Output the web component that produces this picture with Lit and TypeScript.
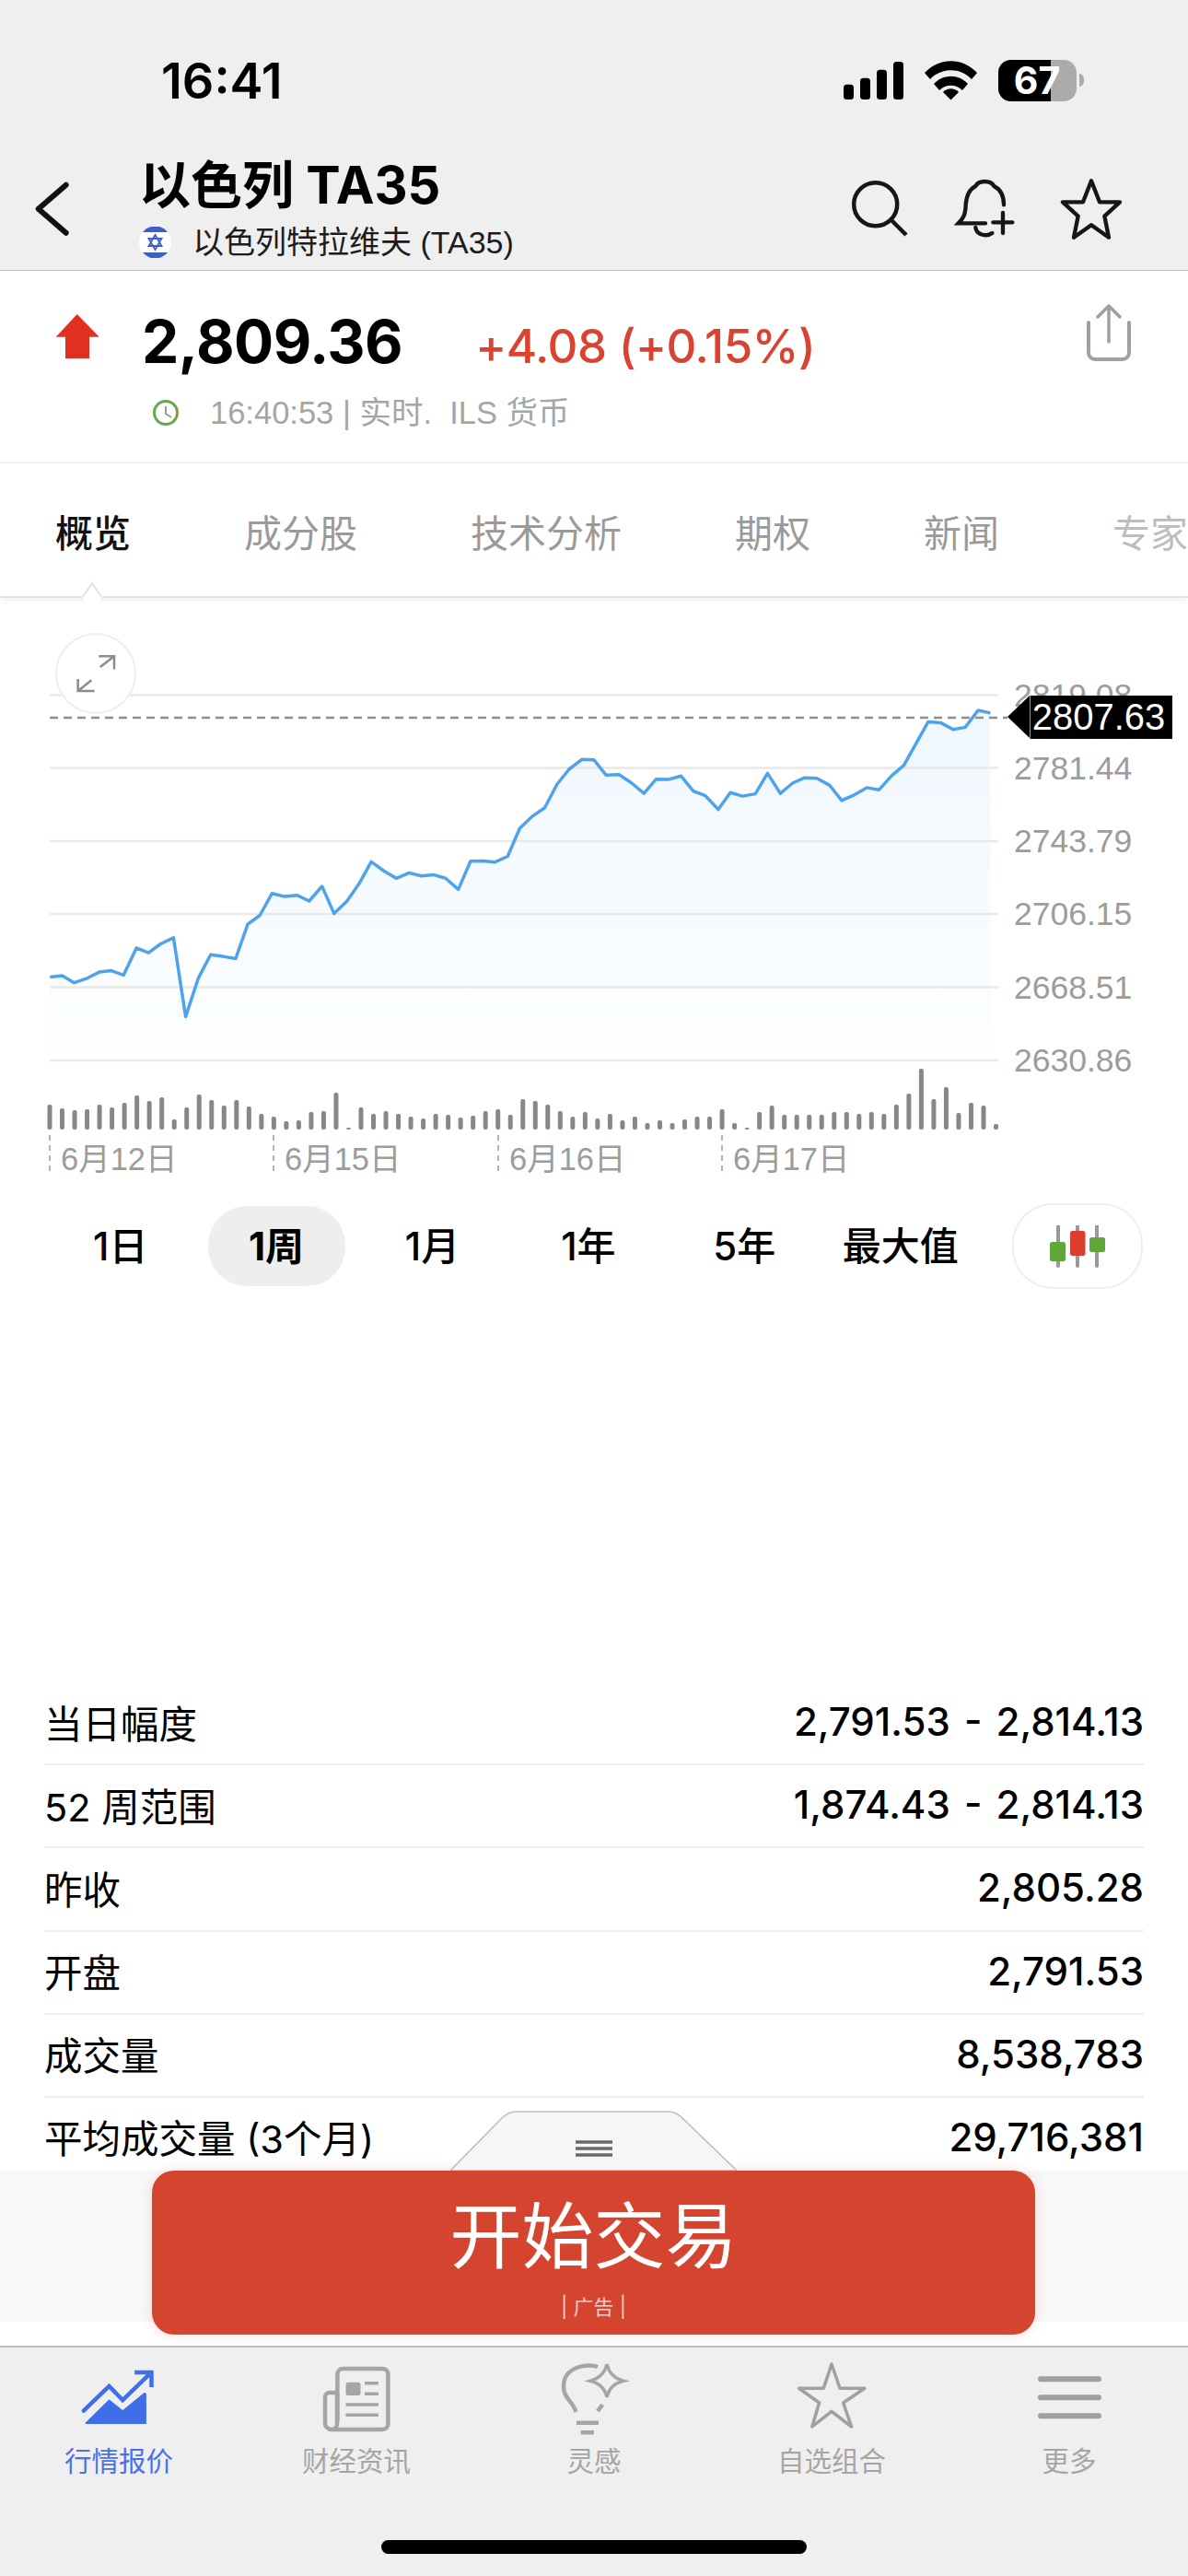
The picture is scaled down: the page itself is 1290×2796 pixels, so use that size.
import { LitElement, html, css, svg } from 'lit';
import { customElement } from 'lit/decorators.js';

// line points read off the reference, x/y in page pixels
const LINE_ZOOM = [
  [66,826],[82,823],[98,839],[115,829],[131,815],[147,812],[163,822],[180,761],[196,772],[212,752],[229,738],[245,915],
  [262,828],[278,776],[294,780],[311,785],[327,708],[343,688],[359,639],[376,646],[392,643],[408,656],[425,623],[441,684],
  [458,656],[474,617],[490,568],[507,589],[523,605],[540,593],[556,600],[572,597],[588,605],[605,630],[621,567],[637,566],
  [653,569],[670,556],[686,493],[702,467],[719,447],[735,395],[751,361],[768,339],[784,340],[800,374],[817,373],[833,391],
  [850,415],[866,383],[882,384],[899,376],[915,410],[931,420],[948,451],[964,413],[980,421],[997,416],[1013,370],[1030,415],
  [1046,392],[1062,380],[1078,381],[1095,397],[1111,431],[1128,418],[1144,402],[1160,407],[1177,375],[1193,352],[1225,255],
  [1242,257],[1258,272],[1274,267],[1291,229],[1307,235],
];
const LINE = LINE_ZOOM.map(([x, y]) => [+(x / 1.2155).toFixed(1), +(660 + y / 2.063).toFixed(1)]);

const VOLUMES = [
  27,23,21,22,27,24,29,37,31,35,11,24,38,32,26,32,25,17,14,9,10,19,20,40,2,24,17,20,17,14,12,17,16,13,15,20,22,16,33,31,27,
  20,14,19,12,17,10,14,7,10,7,11,14,14,22,7,2,19,26,16,16,16,16,19,19,17,19,17,27,39,66,33,46,18,29,26,6,
];

const GRID = [
  { y: 754.5, label: '2819.08' },
  { y: 833.5, label: '2781.44' },
  { y: 913, label: '2743.79' },
  { y: 992, label: '2706.15' },
  { y: 1071.5, label: '2668.51' },
  { y: 1151, label: '2630.86' },
];

const DATES = [
  { x: 54, label: '6月12日' },
  { x: 297, label: '6月15日' },
  { x: 541, label: '6月16日' },
  { x: 784, label: '6月17日' },
];

const STATS = [
  ['当日幅度', '2,791.53 - 2,814.13'],
  ['52 周范围', '1,874.43 - 2,814.13'],
  ['昨收', '2,805.28'],
  ['开盘', '2,791.53'],
  ['成交量', '8,538,783'],
  ['平均成交量 (3个月)', '29,716,381'],
];

const TABS = ['概览', '成分股', '技术分析', '期权', '新闻', '专家'];
const RANGES = ['1日', '1周', '1月', '1年', '5年', '最大值'];

@customElement('app-root')
export class AppRoot extends LitElement {
  static styles = css`
    * {
      margin: 0;
      padding: 0;
      box-sizing: border-box;
    }

    :host {
      display: flex;
      flex-direction: column;
      position: relative;
      width: 1290px;
      height: 2796px;
      overflow: hidden;
      background: #fff;
      color: #000;
      font-family: Inter, 'Noto Sans CJK SC', sans-serif;
    }

    svg {
      display: block;
      flex: none;
    }

    .top {
      height: 294px;
      background: #efeff0;
      border-bottom: 1px solid #b9b9b9;
    }

    .status {
      display: flex;
      align-items: center;
      justify-content: space-between;
      height: 175px;
      padding: 0 113px 0 175px;
    }

    .status__time {
      font-size: 54px;
      font-weight: 600;
      letter-spacing: 0;
    }

    .nav {
      display: flex;
      height: 118px;
      padding-left: 36px;
    }

    .nav__back {
      margin-top: 20px;
    }

    .nav__text {
      margin-left: 75px;
    }

    .nav__title {
      font-size: 56px;
      line-height: 56px;
      font-weight: 700;
      margin-top: -2px;
    }

    .nav__sub {
      display: flex;
      align-items: center;
      gap: 23px;
      margin-top: 14px;
      font-family: 'Liberation Sans', 'Noto Sans CJK SC', sans-serif;
      font-size: 34px;
      line-height: 40px;
      color: #1c1c1c;
    }

    .nav__actions {
      display: flex;
      margin-left: auto;
      padding-right: 70px;
      margin-top: 17px;
      height: 70px;
      align-items: center;
      gap: 46px;
    }

    .quote {
      height: 209px;
      padding: 36px 62px 0 60px;
      border-bottom: 2px solid #f1f1f1;
    }

    .quote__main {
      display: flex;
      height: 62px;
    }

    .quote__arrow {
      margin-top: 11px;
    }

    .quote__values {
      display: flex;
      align-items: baseline;
      margin-left: 46px;
      margin-top: 5px;
      height: 72px;
    }

    .quote__price {
      font-size: 64px;
      line-height: 72px;
      font-weight: 700;
      letter-spacing: -0.5px;
    }

    .quote__change {
      margin-left: 79px;
      font-size: 51px;
      font-weight: 500;
      color: #d9432f;
      letter-spacing: -0.5px;
    }

    .quote__share {
      margin-left: auto;
    }

    .quote__meta {
      display: flex;
      align-items: center;
      gap: 34px;
      margin-top: 36px;
      padding-left: 106px;
      font-family: 'Liberation Sans', 'Noto Sans CJK SC', sans-serif;
      font-size: 34.5px;
      line-height: 40px;
      color: #a5a5a5;
    }

    .tabs {
      position: relative;
      display: flex;
      gap: 123px;
      height: 146px;
      padding: 48px 0 0 60px;
      border-bottom: 2px solid #e2e2e2;
      box-shadow: 0 3px 6px rgba(0, 0, 0, 0.05);
      font-size: 41px;
      line-height: 56px;
      color: #9a9a9a;
      white-space: nowrap;
    }

    .tabs__item--active {
      color: #111;
      font-weight: 500;
    }

    .tabs__item--fade {
      opacity: 0.65;
    }

    .tabs__notch {
      position: absolute;
      left: 90px;
      bottom: -11px;
      width: 20px;
      height: 20px;
      background: #fff;
      border-left: 2px solid #e2e2e2;
      border-top: 2px solid #e2e2e2;
      transform: rotate(45deg) skew(10deg, 10deg);
    }

    .chart {
      position: relative;
      height: 640px;
    }

    .chart__label {
      font-family: 'Liberation Sans', sans-serif;
      font-size: 35.5px;
      fill: #9c9c9c;
    }

    .chart__date {
      font-family: 'Liberation Sans', 'Noto Sans CJK SC', sans-serif;
      font-size: 34.5px;
      fill: #9c9c9c;
    }

    .chart__expand {
      position: absolute;
      left: 60px;
      top: 38px;
      width: 88px;
      height: 88px;
      display: flex;
      align-items: center;
      justify-content: center;
      background: #fff;
      border: 2px solid #eeeeee;
      border-radius: 50%;
    }

    .chart__tag {
      position: absolute;
      left: 1118px;
      top: 106px;
      width: 155px;
      height: 47px;
      padding-right: 6px;
      background: #000;
      border-left: 1px solid #999;
      color: #fff;
      font-family: 'Liberation Sans', sans-serif;
      font-size: 40px;
      line-height: 47px;
      text-align: center;
    }

    .chart__tag::before {
      content: '';
      position: absolute;
      left: -25px;
      top: 0;
      border-style: solid;
      border-width: 23.5px 24px 23.5px 0;
      border-color: transparent #000 transparent transparent;
    }

    .ranges {
      display: flex;
      align-items: center;
      height: 93px;
      margin-top: 17px;
      padding-left: 46px;
    }

    .ranges__item {
      display: flex;
      align-items: center;
      justify-content: center;
      width: 169.4px;
      font-size: 42px;
      font-weight: 500;
    }

    .ranges__item span {
      display: block;
      width: 149px;
      height: 87px;
      line-height: 87px;
      text-align: center;
      border-radius: 42px;
    }

    .ranges__item--active span {
      background: #eeeeee;
      font-weight: 700;
    }

    .ranges__candles {
      display: flex;
      align-items: center;
      justify-content: center;
      width: 142px;
      height: 93px;
      margin-left: 37px;
      border: 2px solid #eeeeee;
      border-radius: 44px;
    }

    .stats {
      margin: 427px 48px 0;
    }

    .stats__row {
      display: flex;
      align-items: center;
      justify-content: space-between;
      height: 90.2px;
      padding-bottom: 3px;
      border-bottom: 2px solid #eeeeee;
      font-size: 41.5px;
    }

    .stats__row:last-child {
      padding-bottom: 6px;
      border-bottom: none;
    }

    .stats__value {
      font-size: 42px;
      font-weight: 500;
      word-spacing: 4px;
    }

    .dock {
      position: absolute;
      left: 0;
      right: 0;
      bottom: 250px;
      height: 190px;
      background: linear-gradient(#f8f8f8 164px, #fff 164px);
    }

    .dock__handle {
      position: absolute;
      left: 487px;
      top: -66px;
    }

    .dock__button {
      display: flex;
      flex-direction: column;
      align-items: center;
      width: 959px;
      height: 178px;
      margin-left: 165px;
      padding-top: 27px;
      background: #d5442f;
      border-radius: 24px;
      box-shadow: 0 0 14px rgba(213, 68, 47, 0.18);
      color: #fff;
    }

    .dock__title {
      font-size: 78px;
      line-height: 90px;
      font-weight: 400;
    }

    .dock__note {
      margin-top: 17px;
      font-size: 22px;
      line-height: 28px;
      color: #f6cdc7;
    }

    .tabbar {
      margin-top: auto;
      height: 250px;
      background: #efeff0;
      border-top: 2px solid #bcbcbc;
    }

    .tabbar__items {
      display: grid;
      grid-template-columns: repeat(5, 1fr);
      padding-top: 14px;
    }

    .tabbar__item {
      display: flex;
      flex-direction: column;
      align-items: center;
      gap: 4px;
      font-size: 29.5px;
      line-height: 30px;
      color: #a5a5a5;
    }

    .tabbar__item--active {
      color: #4a72e8;
    }

    .tabbar__home {
      width: 462px;
      height: 15px;
      margin: 71px auto 0;
      background: #000;
      border-radius: 8px;
    }
  `;

  renderChart() {
    const pts = LINE.map(p => p.join(',')).join(' ');
    const last = LINE[LINE.length - 1];
    const area = `${LINE[0][0]},1151 ${pts} ${last[0]},1151`;
    return html`
      <svg width="1290" height="640" viewBox="0 649 1290 640">
        <defs>
          <linearGradient id="fill" x1="0" y1="0" x2="0" y2="1">
            <stop offset="0" stop-color="#eff7fd"></stop>
            <stop offset="1" stop-color="#fdfeff"></stop>
          </linearGradient>
        </defs>
        <polygon points=${area} fill="url(#fill)"></polygon>
        ${GRID.map(g => svg`
          <line x1="54" x2="1084" y1=${g.y} y2=${g.y} stroke="#e9e9e9" stroke-width="2.5"></line>
          <text class="chart__label" x="1101" y=${g.y + 12}>${g.label}</text>
        `)}
        <line x1="54" x2="1094" y1="779" y2="779" stroke="#8f8f8f" stroke-width="2.5" stroke-dasharray="9 6"></line>
        <polyline points=${pts} fill="none" stroke="#4fa3ec" stroke-width="3.5" stroke-linejoin="round"></polyline>
        ${VOLUMES.map((h, i) => svg`
          <rect x=${51.5 + i * 13.52} y=${1226 - h} width="5" height=${h} rx="2" fill="#85878b"></rect>
        `)}
        ${DATES.map(d => svg`
          <line x1=${d.x} x2=${d.x} y1="1232" y2="1274" stroke="#9a9a9a" stroke-width="1.5" stroke-dasharray="6 5"></line>
          <text class="chart__date" x=${d.x + 12} y="1270">${d.label}</text>
        `)}
      </svg>
      <div class="chart__expand">
        <svg width="44" height="42" viewBox="82 710 45 43" fill="none" stroke="#8c8c8c" stroke-width="2.6">
          <path d="M84.7 737.6V751H103M84.7 751l15-12"></path>
          <path d="M107.8 712.4H125V727M125 712.4l-15.6 12"></path>
        </svg>
      </div>
      <div class="chart__tag">2807.63</div>
    `;
  }

  render() {
    return html`
      <header class="top">
        <div class="status">
          <span class="status__time">16:41</span>
          <svg width="261" height="46" viewBox="916 64 261 46">
            <rect x="916" y="90.7" width="11" height="16.3" rx="3.5"></rect>
            <rect x="934" y="83.7" width="11" height="23.3" rx="3.5"></rect>
            <rect x="952" y="74.7" width="11" height="32.3" rx="3.5"></rect>
            <rect x="970" y="66" width="11" height="41" rx="3.5"></rect>
            <path d="M1004 78c16-17 41-17 57 0l-6 7c-12-13-33-13-45 0z"></path>
            <path d="M1014 90c10-11 27-11 37 0l-6 7c-7-7-18-7-25 0z"></path>
            <path d="M1024 99c5-5 12-5 17 0l-8.500 8.500z"></path>
            <rect x="1084" y="64" width="85" height="45" rx="14" fill="#ababab"></rect>
            <path d="M1098 64h43v45h-43a14 14 0 0 1-14-14V78a14 14 0 0 1 14-14z"></path>
            <path d="M1172 79c3 0 5 3 5 7s-2 7-5 7z" fill="#ababab"></path>
            <text x="1126" y="101" text-anchor="middle" fill="#fff" font-size="41" font-weight="700">67</text>
          </svg>
        </div>
        <nav class="nav">
          <svg class="nav__back" width="40" height="64" viewBox="36 195 40 64" fill="none" stroke="#111" stroke-width="6" stroke-linecap="round" stroke-linejoin="round">
            <path d="M71.700 200.700L41.700 226.700L71.700 252.700"></path>
          </svg>
          <div class="nav__text">
            <div class="nav__title">以色列 TA35</div>
            <div class="nav__sub">
              <svg width="35" height="36" viewBox="0 0 35 36">
                <defs><clipPath id="flag"><circle cx="17.500" cy="18" r="17.500"></circle></clipPath></defs>
                <g clip-path="url(#flag)">
                  <rect width="35" height="36" fill="#fff"></rect>
                  <rect width="35" height="6" y="1" fill="#3c5fc8"></rect>
                  <rect width="35" height="6" y="29" fill="#3c5fc8"></rect>
                </g>
                <path d="M17.500 10l7 12h-14zM17.500 26l-7-12h14z" fill="none" stroke="#3c5fc8" stroke-width="1.800"></path>
              </svg>
              <span>以色列特拉维夫 (TA35)</span>
            </div>
          </div>
          <div class="nav__actions">
            <svg width="66" height="66" viewBox="0 0 66 66" fill="none" stroke="#15151a" stroke-width="4.500">
              <circle cx="26.700" cy="27.700" r="23.500"></circle>
              <path d="M43 44l17 17"></path>
            </svg>
            <svg width="68" height="68" viewBox="560 460 204 204" fill="none" stroke="#15151a" stroke-width="13" stroke-linecap="round">
              <path d="M722 548C722 505 700 492 690 487C680 467 640 467 630 487C610 497 600 520 598 548C597 580 590 592 574 608H662"></path>
              <path d="M630 622C634 648 668 652 684 640"></path>
              <path d="M687 605H750M719 574V640"></path>
            </svg>
            <svg width="70" height="70" viewBox="900 455 210 210" fill="none" stroke="#15151a" stroke-width="13" stroke-linejoin="round">
              <polygon points="1005,468 1032,537 1098,537 1048,583 1062,652 1005,612 948,652 962,583 912,537 978,537"></polygon>
            </svg>
          </div>
        </nav>
      </header>

      <section class="quote">
        <div class="quote__main">
          <svg class="quote__arrow" width="48" height="48" viewBox="60 341 48 48">
            <path d="M83.700 341L107.700 365.700H97V389H71V365.700H60.700z" fill="#e1301f"></path>
          </svg>
          <div class="quote__values">
            <span class="quote__price">2,809.36</span>
            <span class="quote__change">+4.08 (+0.15%)</span>
          </div>
          <svg class="quote__share" width="48" height="62" viewBox="0 0 48 62" fill="none" stroke="#a0a0a0" stroke-width="3.500" stroke-linecap="round" stroke-linejoin="round">
            <path d="M24 41V2M12 14L24 2l12 12"></path>
            <path d="M2 20v33a7 7 0 0 0 7 7h30a7 7 0 0 0 7-7V20" stroke-width="4"></path>
          </svg>
        </div>
        <div class="quote__meta">
          <svg width="28" height="30" viewBox="0 0 28 30" fill="none">
            <circle cx="14" cy="15" r="12.500" stroke="#6aa84f" stroke-width="3"></circle>
            <path d="M14 8v8l6 4" stroke="#9a9a9a" stroke-width="2"></path>
          </svg>
          <span>16:40:53 | 实时.&nbsp; ILS 货币</span>
        </div>
      </section>

      <div class="tabs">
        ${TABS.map((t, i) => html`
          <span class="tabs__item ${i === 0 ? 'tabs__item--active' : ''} ${i === 5 ? 'tabs__item--fade' : ''}">${t}</span>
        `)}
        <i class="tabs__notch"></i>
      </div>

      <div class="chart">${this.renderChart()}</div>

      <div class="ranges">
        ${RANGES.map((r, i) => html`
          <div class="ranges__item ${i === 1 ? 'ranges__item--active' : ''}"><span>${r}</span></div>
        `)}
        <div class="ranges__candles">
          <svg width="62" height="46" viewBox="1139 1329 62 46">
            <path d="M1149 1330v43M1170 1330v43M1191 1330v43" stroke="#999" stroke-width="4" stroke-linecap="round"></path>
            <rect x="1140" y="1347" width="17" height="21" rx="2.500" fill="#5fa63b"></rect>
            <rect x="1162" y="1335" width="16.500" height="27" rx="2.500" fill="#db3f2c"></rect>
            <rect x="1183" y="1342" width="17" height="16" rx="2.500" fill="#5fa63b"></rect>
          </svg>
        </div>
      </div>

      <section class="stats">
        ${STATS.map(([k, v]) => html`
          <div class="stats__row"><span>${k}</span><span class="stats__value">${v}</span></div>
        `)}
      </section>

      <div class="dock">
        <svg class="dock__handle" width="316" height="66" viewBox="487 2290 316 66">
          <path d="M489 2356L546 2298Q553 2292 560 2292H726Q733 2292 740 2298L800 2356z" fill="#f6f6f7" stroke="#bbbbbb" stroke-width="1.500"></path>
          <path d="M625 2325H665M625 2332H665M625 2339H665" stroke="#6a6a6a" stroke-width="3.500"></path>
        </svg>
        <div class="dock__button">
          <div class="dock__title">开始交易</div>
          <div class="dock__note">| 广告 |</div>
        </div>
      </div>

      <footer class="tabbar">
        <div class="tabbar__items">
          <div class="tabbar__item tabbar__item--active">
            <svg width="100" height="90" viewBox="0 0 100 90">
              <path d="M11.800 54.700L39.500 28L54.200 43L84.600 13.700" fill="none" stroke="#3f6ee8" stroke-width="4.500" stroke-linecap="round"></path>
              <path d="M67.200 13H85.500V29" fill="none" stroke="#3f6ee8" stroke-width="4.500"></path>
              <path d="M13.400 68L39.500 42.300L54.200 54L77.900 34.700L79.900 36V69H14z" fill="#3f6ee8"></path>
            </svg>
            <span>行情报价</span>
          </div>
          <div class="tabbar__item">
            <svg width="100" height="90" viewBox="0 0 100 90" fill="none" stroke="#a5a5a5" stroke-width="4.500">
              <path d="M29.400 66V15a6 6 0 0 1 6-6h43a6 6 0 0 1 6 6v54a6 6 0 0 1-6 6H23"></path>
              <path d="M29 35H21a5 5 0 0 0-5 5v28a7 7 0 0 0 7 7a6 6 0 0 0 6-7V35"></path>
              <rect x="38.500" y="23.700" width="16" height="14.300" rx="2.500" fill="#a5a5a5" stroke="none"></rect>
              <path d="M59 24.700H74M59 36.300H74M38.500 48H74M38.500 59.300H74" stroke-width="3.500"></path>
            </svg>
            <span>财经资讯</span>
          </div>
          <div class="tabbar__item">
            <svg width="100" height="90" viewBox="0 0 100 90" fill="none" stroke="#a5a5a5" stroke-width="4.500">
              <path d="M54 7C44 3 17 6 17 28C17 42 27 44 30.500 56"></path>
              <path d="M59.300 48L54 55"></path>
              <path d="M64 4Q67 18 82 22.300Q67 26 64 40Q61 26 46 22.300Q61 18 64 4z" stroke-width="3.500"></path>
              <path d="M31 67.700H55M35.600 78.300H50"></path>
            </svg>
            <span>灵感</span>
          </div>
          <div class="tabbar__item">
            <svg width="100" height="90" viewBox="0 0 100 90" fill="none" stroke="#a0a0a0" stroke-width="3.500" stroke-linejoin="round">
              <polygon points="50,4 59,30.300 86,30.300 62.700,46 71.600,72 50,55.300 28.800,72 36.600,46 14.500,30.300 41.300,30.300"></polygon>
            </svg>
            <span>自选组合</span>
          </div>
          <div class="tabbar__item">
            <svg width="100" height="90" viewBox="0 0 100 90" fill="none" stroke="#9f9f9f" stroke-width="6" stroke-linecap="round">
              <path d="M19 20.300H82M19 40.300H82M19 60.300H82"></path>
            </svg>
            <span>更多</span>
          </div>
        </div>
        <div class="tabbar__home"></div>
      </footer>
    `;
  }
}
